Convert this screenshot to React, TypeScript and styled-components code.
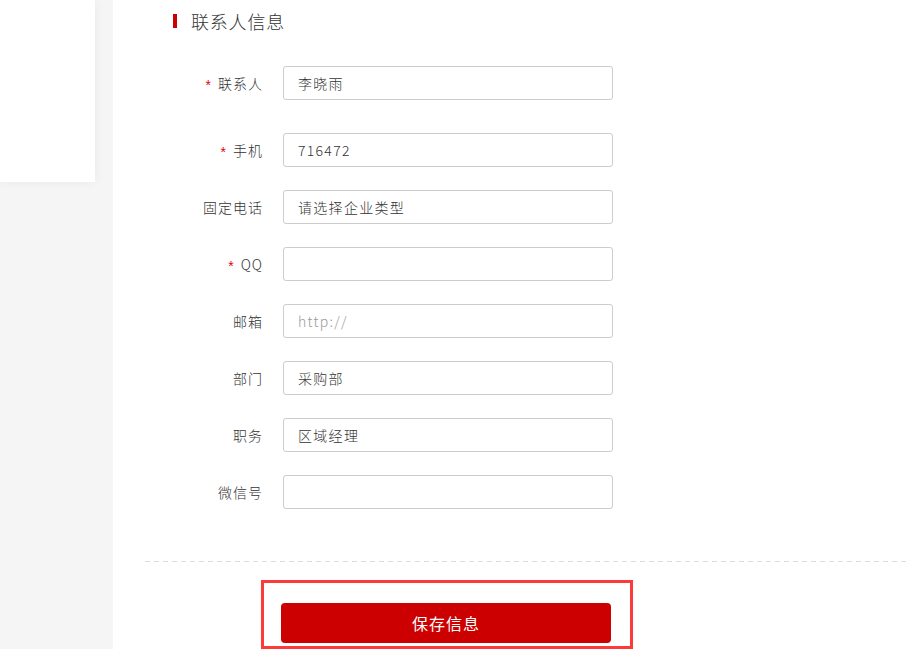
import styled, { createGlobalStyle } from "styled-components";

const GlobalStyle = createGlobalStyle`
  html, body {
    margin: 0;
    padding: 0;
    background: #f5f5f5;
    font-family: "Noto Sans CJK SC", "Liberation Sans", sans-serif;
    color: #333;
  }
  * {
    box-sizing: border-box;
  }
`;

type Field = {
  label: string;
  required?: boolean;
  value?: string;
  placeholder?: string;
};

const fields: Field[] = [
  { label: "联系人", required: true, value: "李晓雨" },
  { label: "手机", required: true, value: "716472" },
  { label: "固定电话", value: "请选择企业类型" },
  { label: "QQ", required: true, value: "" },
  { label: "邮箱", placeholder: "http://" },
  { label: "部门", value: "采购部" },
  { label: "职务", value: "区域经理" },
  { label: "微信号", value: "" },
];

export default function App() {
  return (
    <>
      <GlobalStyle />
      <StyledPage>
        <StyledSidebar>
          <StyledSideCard />
        </StyledSidebar>

        <StyledMain>
          <StyledSectionTitle>联系人信息</StyledSectionTitle>

          <StyledForm>
            {fields.map((field, i) => (
              <StyledRow key={field.label} $first={i === 0}>
                <StyledLabel>
                  {field.required && <StyledStar>*</StyledStar>}
                  {field.label}
                </StyledLabel>
                <StyledInput
                  defaultValue={field.value}
                  placeholder={field.placeholder}
                />
              </StyledRow>
            ))}
          </StyledForm>

          <StyledDivider />

          <StyledSubmitArea>
            <StyledSaveButton type="button">保存信息</StyledSaveButton>
          </StyledSubmitArea>
        </StyledMain>
      </StyledPage>
    </>
  );
}

const StyledPage = styled.div`
  display: flex;
  min-height: 649px;
  overflow: hidden;
`;

const StyledSidebar = styled.aside`
  width: 95px;
  flex-shrink: 0;
  margin-right: 18px;
`;

const StyledSideCard = styled.div`
  height: 182px;
  background: #fff;
  box-shadow: 0 0 10px rgba(0, 0, 0, 0.05);
`;

const StyledMain = styled.main`
  flex: 1;
  background: #fff;
  padding-left: 32px;
`;

const StyledSectionTitle = styled.h2`
  display: flex;
  align-items: center;
  height: 42px;
  margin: 0 0 0 28px;
  font-size: 18px;
  font-weight: 300;
  letter-spacing: 0.8px;
  color: #333;

  &::before {
    content: "";
    width: 4px;
    height: 14px;
    margin-right: 14px;
    background: #cc0000;
  }
`;

const StyledForm = styled.div`
  padding-top: 24px;
`;

const StyledRow = styled.div<{ $first: boolean }>`
  display: grid;
  grid-template-columns: 118px 330px;
  column-gap: 20px;
  align-items: center;
  margin-bottom: ${(props) => (props.$first ? "33px" : "23px")};

  &:last-child {
    margin-bottom: 0;
  }
`;

const StyledLabel = styled.label`
  text-align: right;
  font-size: 14px;
  font-weight: 300;
  letter-spacing: 1px;
  color: #333;
`;

const StyledStar = styled.span`
  font-family: "Liberation Sans", sans-serif;
  font-size: 14px;
  color: #e60012;
  margin-right: 6px;
  vertical-align: -1px;
`;

const StyledInput = styled.input`
  height: 34px;
  width: 330px;
  padding: 0 14px;
  border: 1px solid #cccccc;
  border-radius: 3px;
  font-family: inherit;
  font-size: 14px;
  font-weight: 300;
  letter-spacing: 1.3px;
  color: #333;
  outline: none;

  &::placeholder {
    color: #999;
  }
`;

const StyledDivider = styled.div`
  height: 1px;
  margin-top: 52px;
  background: repeating-linear-gradient(
    to right,
    #dddddd 0 5px,
    transparent 5px 9px
  );
`;

const StyledSubmitArea = styled.div`
  width: 372px;
  height: 69px;
  margin: 18px 0 0 116px;
  padding: 20px 19px 3px 17px;
  border: 3px solid #fd3a3a;
`;

const StyledSaveButton = styled.button`
  width: 330px;
  height: 40px;
  border: 0;
  border-radius: 4px;
  background: #cc0000;
  color: #fff;
  font-family: inherit;
  font-size: 16px;
  letter-spacing: 1px;
  cursor: pointer;
`;
